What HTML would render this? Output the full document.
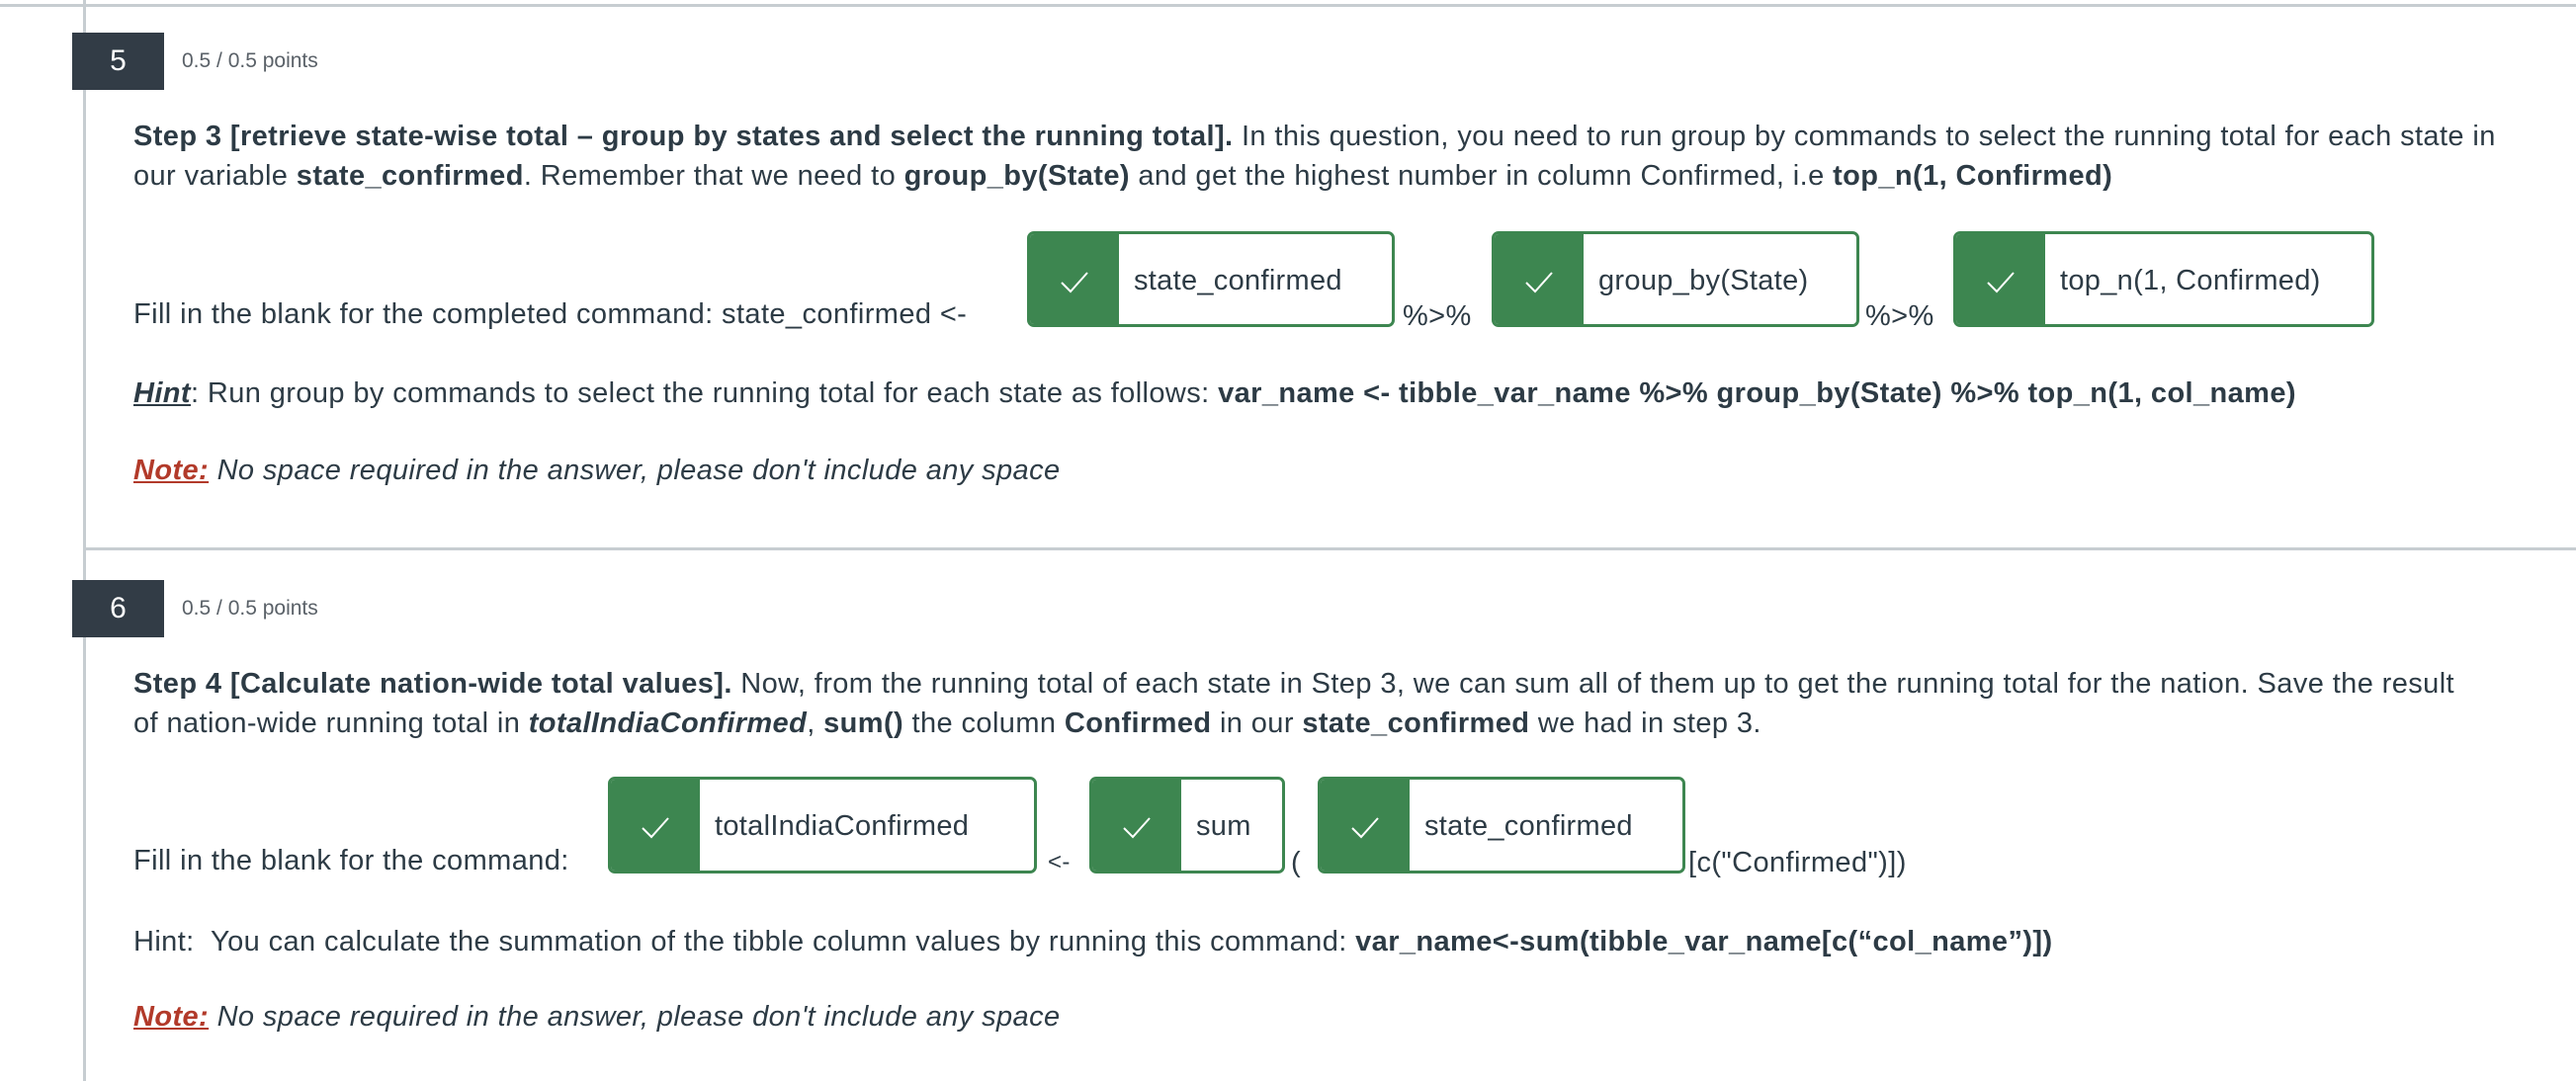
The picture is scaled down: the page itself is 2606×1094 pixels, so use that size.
<!DOCTYPE html>
<html><head><meta charset="utf-8"><style>
html,body{margin:0;padding:0;width:2606px;height:1094px;background:#fff;overflow:hidden;position:relative;font-family:"Liberation Sans",sans-serif;color:#2d3b45}
.a{position:absolute;white-space:nowrap}
.t{font-size:29px;letter-spacing:0.4px;line-height:40px}
.badge{position:absolute;background:#323c46;color:#fff;font-size:30px;text-align:center}
.pts{font-size:21px;color:#5a6168;letter-spacing:0px}
.box{position:absolute;border:3px solid #3d8650;border-radius:7px;background:#fff;box-sizing:border-box;overflow:hidden}
.box .g{position:absolute;left:0;top:0;bottom:0;width:90px;background:#3d8650}
.box .g svg{position:absolute;left:30px;top:37px}
.box .v{position:absolute;left:105px;top:31px;font-size:29px;letter-spacing:0.3px}
b{font-weight:bold}
.note{color:#b23a2a;font-weight:bold;font-style:italic;text-decoration:underline}
</style></head><body>
<div class="a" style="left:0;top:4px;width:2606px;height:3px;background:#c7cdd1"></div>
<div class="a" style="left:84px;top:0;width:3px;height:1094px;background:#c7cdd1"></div>
<div class="a" style="left:84px;top:554px;width:2522px;height:3px;background:#c7cdd1"></div>

<div class="badge" style="left:73px;top:33px;width:93px;height:58px;line-height:58px">5</div>
<div class="a pts" style="left:184px;top:50px">0.5 / 0.5 points</div>
<div class="a t" style="left:135px;top:118px"><b>Step 3 [retrieve state-wise total – group by states and select the running total].</b> In this question, you need to run group by commands to select the running total for each state in</div>
<div class="a t" style="left:135px;top:158px">our variable <b>state_confirmed</b>. Remember that we need to <b>group_by(State)</b> and get the highest number in column Confirmed, i.e <b>top_n(1, Confirmed)</b></div>
<div class="a t" style="left:135px;top:298px">Fill in the blank for the completed command: state_confirmed &lt;-</div>
<div class="box" style="left:1039px;top:234px;width:372px;height:97px"><div class="g"><svg width="30" height="24"><path d="M2 12 L11 21 L28 2" fill="none" stroke="#fff" stroke-width="2"/></svg></div><div class="v">state_confirmed</div></div>
<div class="a t" style="left:1419px;top:300px">%&gt;%</div>
<div class="box" style="left:1509px;top:234px;width:372px;height:97px"><div class="g"><svg width="30" height="24"><path d="M2 12 L11 21 L28 2" fill="none" stroke="#fff" stroke-width="2"/></svg></div><div class="v">group_by(State)</div></div>
<div class="a t" style="left:1887px;top:300px">%&gt;%</div>
<div class="box" style="left:1976px;top:234px;width:426px;height:97px"><div class="g"><svg width="30" height="24"><path d="M2 12 L11 21 L28 2" fill="none" stroke="#fff" stroke-width="2"/></svg></div><div class="v">top_n(1, Confirmed)</div></div>
<div class="a t" style="left:135px;top:378px"><b><i><u>Hint</u></i></b>: Run group by commands to select the running total for each state as follows: <b>var_name &lt;- tibble_var_name %&gt;% group_by(State) %&gt;% top_n(1, col_name)</b></div>
<div class="a t" style="left:135px;top:456px"><span class="note">Note:</span> <i>No space required in the answer, please don't include any space</i></div>

<div class="badge" style="left:73px;top:587px;width:93px;height:58px;line-height:58px">6</div>
<div class="a pts" style="left:184px;top:604px">0.5 / 0.5 points</div>
<div class="a t" style="left:135px;top:672px"><b>Step 4 [Calculate nation-wide total values].</b> Now, from the running total of each state in Step 3, we can sum all of them up to get the running total for the nation. Save the result</div>
<div class="a t" style="left:135px;top:712px">of nation-wide running total in <b><i>totalIndiaConfirmed</i></b>, <b>sum()</b> the column <b>Confirmed</b> in our <b>state_confirmed</b> we had in step 3.</div>
<div class="a t" style="left:135px;top:851px">Fill in the blank for the command:</div>
<div class="box" style="left:615px;top:786px;width:434px;height:98px"><div class="g"><svg width="30" height="24"><path d="M2 12 L11 21 L28 2" fill="none" stroke="#fff" stroke-width="2"/></svg></div><div class="v">totalIndiaConfirmed</div></div>
<div class="a t" style="left:1060px;top:853px;font-size:24px">&lt;-</div>
<div class="box" style="left:1102px;top:786px;width:198px;height:98px"><div class="g"><svg width="30" height="24"><path d="M2 12 L11 21 L28 2" fill="none" stroke="#fff" stroke-width="2"/></svg></div><div class="v">sum</div></div>
<div class="a t" style="left:1306px;top:853px">(</div>
<div class="box" style="left:1333px;top:786px;width:372px;height:98px"><div class="g"><svg width="30" height="24"><path d="M2 12 L11 21 L28 2" fill="none" stroke="#fff" stroke-width="2"/></svg></div><div class="v">state_confirmed</div></div>
<div class="a t" style="left:1708px;top:853px">[c("Confirmed")])</div>
<div class="a t" style="left:135px;top:933px">Hint:&nbsp; You can calculate the summation of the tibble column values by running this command: <b>var_name&lt;-sum(tibble_var_name[c(“col_name”)])</b></div>
<div class="a t" style="left:135px;top:1009px"><span class="note">Note:</span> <i>No space required in the answer, please don't include any space</i></div>
</body></html>
